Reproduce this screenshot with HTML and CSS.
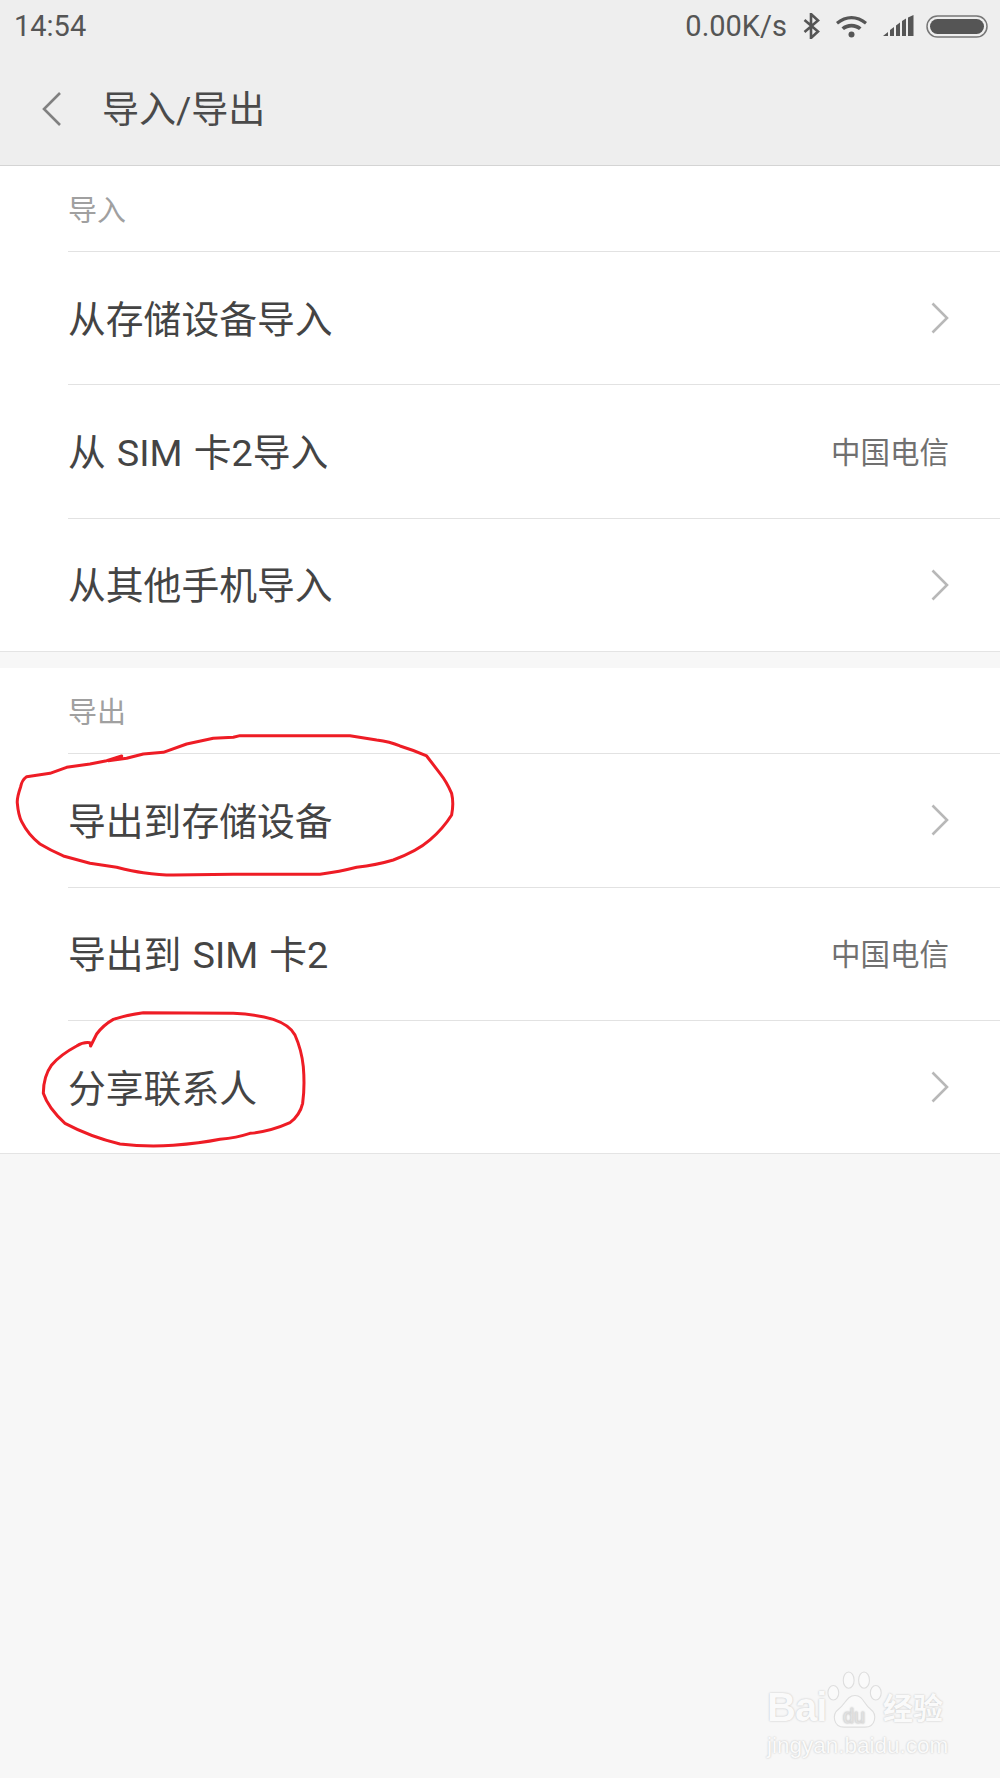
FILE: index.html
```html
<!DOCTYPE html>
<html lang="zh-CN">
  <head>
    <meta charset="UTF-8" />
    <meta name="viewport" content="width=device-width, initial-scale=1.0" />
    <title>导入/导出</title>
    <link rel="stylesheet" href="styles.css">
  </head>
  <body>
    <div class="top">
      <div class="status-bar">
        <span class="time">14:54</span>
        <div class="status-right">
          <span class="speed">0.00K/s</span>
          <svg class="bt" width="17" height="26" viewBox="0 0 17 26">
            <path d="M1.5 7 L15 18.5 L8 25 V1 L15 7.5 L1.5 19" fill="none" stroke="#555" stroke-width="2.6" />
          </svg>
          <svg class="wifi" width="33" height="24" viewBox="0 0 33 24">
            <path d="M1 8 C10 0 23 0 32 8 L30 10.500 C21 3.500 12 3.500 3 10.500 Z" fill="#555" />
            <path d="M6.500 13.500 C12 8.500 21 8.500 26.500 13.500 L24 16 C19.500 12.500 13.500 12.500 9 16 Z" fill="#555" />
            <circle cx="16.500" cy="20.500" r="3" fill="#555" />
          </svg>
          <svg class="signal" width="31" height="22" viewBox="0 0 31 22">
            <path d="M0 21 L5 17 V21 Z M7 15 L11 12 V21 H7 Z M13 10.500 L17 7.500 V21 H13 Z M19 6 L23 3.500 V21 H19 Z M25 2.500 L30.500 0 V21 H25 Z" fill="#555" />
          </svg>
          <svg class="battery" width="62" height="23" viewBox="0 0 62 23">
            <rect x="1" y="1" width="60" height="21" rx="10.500" fill="none" stroke="#777" stroke-width="1.500" />
            <rect x="4" y="4" width="54" height="15" rx="7.500" fill="#555" />
          </svg>
        </div>
      </div>
      <div class="title-bar">
        <svg class="back" width="20" height="36" viewBox="0 0 20 36">
          <path d="M18 2 L2 18 L18 34" fill="none" stroke="#808080" stroke-width="2.600" />
        </svg>
        <h1>导入/导出</h1>
      </div>
    </div>

    <section class="group">
      <div class="group-label">导入</div>
      <div class="row">
        <span>从存储设备导入</span>
        <svg class="arrow" width="18" height="32" viewBox="0 0 18 32"><path d="M1.500 1.500 L16 16 L1.500 30.500" /></svg>
      </div>
      <div class="row">
        <span>从 SIM 卡2导入</span>
        <span class="carrier">中国电信</span>
      </div>
      <div class="row">
        <span>从其他手机导入</span>
        <svg class="arrow" width="18" height="32" viewBox="0 0 18 32"><path d="M1.500 1.500 L16 16 L1.500 30.500" /></svg>
      </div>
    </section>

    <section class="group">
      <div class="group-label">导出</div>
      <div class="row">
        <span>导出到存储设备</span>
        <svg class="arrow" width="18" height="32" viewBox="0 0 18 32"><path d="M1.500 1.500 L16 16 L1.500 30.500" /></svg>
      </div>
      <div class="row">
        <span>导出到 SIM 卡2</span>
        <span class="carrier">中国电信</span>
      </div>
      <div class="row">
        <span>分享联系人</span>
        <svg class="arrow" width="18" height="32" viewBox="0 0 18 32"><path d="M1.500 1.500 L16 16 L1.500 30.500" /></svg>
      </div>
    </section>

    <!-- red pen marks, traced in 3x crop units -->
    <svg class="pen" width="1000" height="1778" viewBox="0 0 1000 1778">
      <g transform="translate(0 640) scale(0.3333)">
        <path d="M365 348 L320 362 L270 372 L200 382 L150 400 L80 410 Q66 420 62 440 Q50 475 52 490 Q55 525 65 545 Q85 585 120 612 Q150 630 190 648 L270 670 L350 682 Q400 695 430 698 Q480 705 520 705 L700 703 L960 703 Q1020 695 1070 682 Q1130 675 1180 660 Q1250 635 1290 600 Q1330 565 1355 525 Q1362 490 1355 460 Q1340 425 1320 400 L1280 348 Q1240 330 1200 318 Q1170 305 1130 300 L1050 287 L720 287 L700 292 L640 295 L560 312 L490 337 L430 342 L380 355 L325 362" />
      </g>
      <g transform="translate(0 960) scale(0.3333)">
        <path d="M272 258 L270 248 Q250 245 230 258 Q180 285 155 315 Q130 350 130 400 Q145 445 195 490 Q270 530 360 552 Q440 562 520 556 Q600 550 660 538 Q710 533 750 520 Q810 515 870 488 Q900 465 908 430 Q915 380 910 320 Q905 270 885 225 Q870 195 820 178 Q770 163 700 160 L430 158 Q380 165 340 178 Q310 195 290 222 L272 258" />
      </g>
    </svg>

    <div class="watermark">
      <div class="wm-logo">
        <span class="wm-bai">Bai</span>
        <svg class="wm-paw" width="56" height="58" viewBox="0 0 62 64">
          <g fill="#fafafa" stroke="#dedede" stroke-width="1.200">
            <ellipse cx="7" cy="24" rx="6" ry="8" />
            <ellipse cx="24" cy="10" rx="6" ry="9" />
            <ellipse cx="41" cy="10" rx="6" ry="9" />
            <ellipse cx="54" cy="24" rx="6" ry="8" />
            <path d="M31 27 C40 27 41 37 48 42 C56 48 54 62 42 62 H19 C7 62 5 48 13 42 C20 37 22 27 31 27 Z" />
          </g>
          <text class="wm-du" x="30" y="57" text-anchor="middle">du</text>
        </svg>
        <span class="wm-cn">经验</span>
      </div>
      <div class="wm-url">jingyan.baidu.com</div>
    </div>
  </body>
</html>
```

FILE: styles.css
```css
body {
  margin: 0;
  width: 1000px;
  height: 1778px;
  overflow: hidden;
  position: relative;
  background-color: #f7f7f7;
  font-family: Roboto, "Noto Sans CJK SC", sans-serif;
  color: #444;
}

.top {
  background-color: #eeeeee;
  border-bottom: 1px solid #d4d4d4;
  height: 165px;
}

.status-bar {
  height: 52px;
  display: flex;
  align-items: center;
  justify-content: space-between;
  padding: 0 12px 0 14px;
  font-size: 29px;
  color: #555;
}

.status-right {
  display: flex;
  align-items: center;
}

.speed {
  margin-right: 16px;
}

.wifi {
  margin-left: 15px;
}

.signal {
  margin-left: 15px;
}

.battery {
  margin-left: 12px;
}

.title-bar {
  height: 113px;
  display: flex;
  align-items: center;
  padding-left: 42px;
}

.title-bar h1 {
  margin: 0 0 4px 40px;
  font-size: 37px;
  font-weight: 400;
  color: #4a4a4a;
}

.group {
  background-color: white;
  border-bottom: 1px solid #e4e4e4;
  margin-bottom: 16.5px;
  padding-left: 68px;
}

.group-label {
  height: 85px;
  line-height: 90px;
  font-size: 29px;
  color: #a0a0a0;
}

.row {
  height: 132.4px;
  border-top: 1px solid #e2e2e2;
  display: flex;
  align-items: center;
  justify-content: space-between;
  padding-right: 51px;
  font-size: 37.8px;
  word-spacing: 1.7px;
  color: #444;
}

.row span {
  margin-bottom: 4px;
}

.row:last-child {
  height: 132px;
}

.carrier {
  font-size: 29.500px;
  color: #707070;
}

.arrow path {
  fill: none;
  stroke: #b8b8b8;
  stroke-width: 2.600px;
}

.pen {
  position: absolute;
  left: 0;
  top: 0;
}

.pen path {
  fill: none;
  stroke: #ee1c25;
  stroke-width: 9px;
  stroke-linejoin: round;
  stroke-linecap: round;
}

.watermark {
  position: absolute;
  left: 767px;
  top: 1671px;
  width: 190px;
  color: #fafafa;
  font-family: "Liberation Sans", "Noto Sans CJK SC", sans-serif;
  text-shadow: 0 0 2px #bcbcbc;
}

.wm-logo {
  display: flex;
  align-items: flex-end;
  height: 58px;
}

.wm-bai {
  font-size: 40px;
  font-weight: 700;
  line-height: 44px;
  letter-spacing: -1px;
  width: 60px;
}

.wm-paw {
  flex: none;
}

.wm-du {
  font-family: "Liberation Sans", sans-serif;
  font-size: 22px;
  fill: #f4f4f4;
  stroke: #dcdcdc;
  stroke-width: 0.600px;
}

.wm-cn {
  font-size: 30px;
  font-weight: 700;
  line-height: 40px;
  white-space: nowrap;
}

.wm-url {
  font-size: 22.500px;
  line-height: 26px;
  margin-top: 4px;
  white-space: nowrap;
}
```
